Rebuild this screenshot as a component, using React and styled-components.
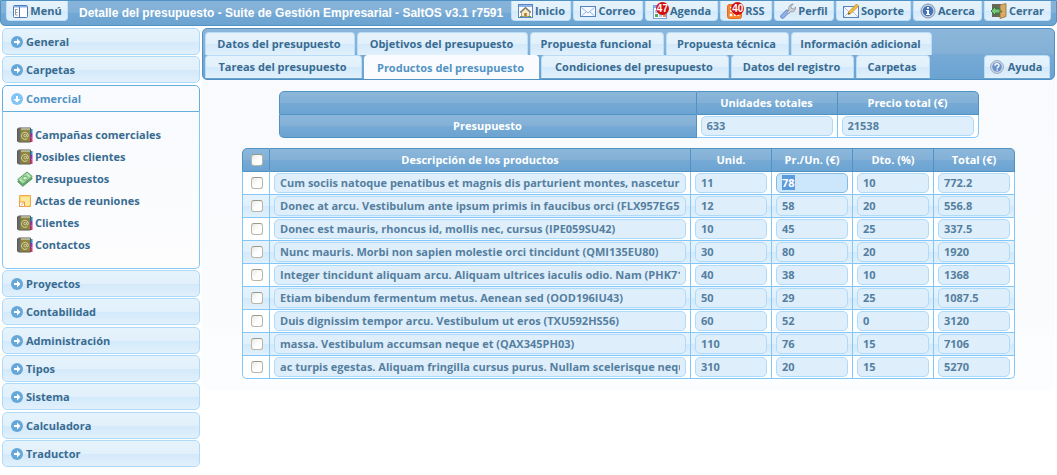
import React, { useEffect, useRef, useState } from "react";
import styled, { createGlobalStyle, css } from "styled-components";

const ink = "#386b91";
const deep = "#4f92c3";
const sky = "#83c6f8";
const pale = "#aedbfa";

const softGlass = "linear-gradient(#e6f3fc 0, #e1f0fb 50%, #d3e9fa 51%, #e1f0fc 100%)";
const blueGlass = "linear-gradient(#8cb7db 0, #83b0d6 48%, #76aad5 52%, #6ba3d1 100%)";

const GlobalStyle = createGlobalStyle`
  *, *::before, *::after { box-sizing: border-box; }
  body {
    margin: 0;
    background: #fff;
    color: ${ink};
    font: bold 11px/14px "Open Sans", "Noto Sans", sans-serif;
  }
  button, input { font: inherit; color: inherit; }
`;

const Toolbar = styled.header`
  display: flex;
  align-items: flex-start;
  height: 26px;
  padding: 0 5px;
  border: 1px solid ${deep};
  border-radius: 0 0 5px 5px;
  background: linear-gradient(#86b3d9 0, #82b0d7 48%, #72a8d5 52%, #6ba3d1 100%);
`;

const Title = styled.h1`
  flex: 1;
  margin: 0;
  padding-left: 11px;
  overflow: hidden;
  color: #fff;
  font: bold 12px/24px "Liberation Sans", Arial, sans-serif;
  white-space: nowrap;
`;

const ButtonGroup = styled.nav`
  display: flex;
  gap: 2px;
`;

const ToolButton = styled.button`
  display: flex;
  align-items: center;
  justify-content: center;
  gap: 2px;
  width: ${(p) => p.$width}px;
  height: 20px;
  padding: 0;
  border: 1px solid #bfe0f9;
  border-top: 0;
  border-radius: 0 0 4px 4px;
  background: ${softGlass};
  white-space: nowrap;
`;

const IconBox = styled.span`
  position: relative;
  display: flex;
  flex: none;
  svg { display: block; }
`;

const Badge = styled.span`
  position: absolute;
  top: -1px;
  right: -1px;
  width: 13px;
  height: 13px;
  border-radius: 50%;
  background: #d40d0d;
  color: #fff;
  font: bold 10px/13px "Liberation Sans", Arial, sans-serif;
  text-align: center;
`;

const Workspace = styled.div`
  display: flex;
  align-items: flex-start;
  gap: 2px;
  padding: 2px 2px 0;
`;

const Sidebar = styled.aside`
  flex: none;
  width: 198px;
`;

const Section = styled.section`
  margin-bottom: 1px;
  &:nth-child(3n + 2) { margin-bottom: 2px; }
`;

const SectionToggle = styled.button`
  display: flex;
  align-items: center;
  gap: 3px;
  width: 100%;
  height: 27px;
  padding: 0 8px;
  border: 1px solid ${pale};
  border-radius: 5px;
  background: ${softGlass};
  ${(p) => p.$open && css`
    border-color: #66aede;
    border-radius: 5px 5px 0 0;
    background: #f9fbfe;
    color: #5293c5;
  `}
`;

const SectionBody = styled.div`
  display: flex;
  flex-direction: column;
  gap: 8px;
  padding: 16px 14px;
  border: 1px solid ${sky};
  border-top: 0;
  border-radius: 0 0 5px 5px;
  background: linear-gradient(#f8fafd, #fdfdfe);
`;

const MenuLink = styled.a`
  display: flex;
  align-items: center;
  gap: 2px;
  height: 14px;
  color: inherit;
  text-decoration: none;
`;

const Main = styled.main`
  flex: 1;
  min-width: 0;
  min-height: 362px;
  border-radius: 5px;
  background: linear-gradient(#f9fafd 0, #f9fbfd 80%, #fcfdfe 86%);
`;

const TabBar = styled.div`
  display: flex;
  flex-direction: column;
  height: 52px;
  padding: 3px 4px 0 2px;
  border: 1px solid ${deep};
  border-radius: 5px;
  background: ${blueGlass};
`;

const TabRow = styled.div`
  display: flex;
  gap: 2px;
  height: 24px;
`;

const Tab = styled.button`
  display: flex;
  align-items: center;
  justify-content: center;
  gap: 4px;
  width: ${(p) => p.$width}px;
  height: ${(p) => (p.$active ? 24 : 23)}px;
  padding: 0 2px 0 0;
  border: 1px solid ${(p) => (p.$active ? "#f9fbfe" : "#b9dcf7")};
  border-bottom: 0;
  border-radius: 4px 4px 0 0;
  background: ${(p) => (p.$active ? "#f9fbfe" : softGlass)};
  color: ${(p) => (p.$active ? "#5293c5" : ink)};
  white-space: nowrap;
  ${(p) => p.$end && "margin-left: auto;"}
`;

const Tables = styled.div`
  display: flex;
  flex-direction: column;
  align-items: center;
  gap: 10px;
  padding: 11px 0;
`;

const Grid = styled.table`
  table-layout: fixed;
  width: ${(p) => p.$width}px;
  border-spacing: 0;
  border-collapse: separate;

  tr > :first-child { border-left-width: 1px; }
  tr:first-child > :first-child { border-top-left-radius: 5px; }
  tr:first-child > :last-child { border-top-right-radius: 5px; }
`;

const Body = styled.tbody`
  && tr > :first-child, && tr > :last-child { border-top-left-radius: 0; border-top-right-radius: 0; }
  && tr:last-child > :first-child { border-bottom-left-radius: 5px; }
  && tr:last-child > :last-child { border-bottom-right-radius: 5px; }
`;

const Head = styled.th`
  height: ${(p) => (p.$tall ? 24 : 23)}px;
  padding: 0;
  border: 0 solid ${deep};
  border-width: ${(p) => (p.$tall ? "1px 1px 1px 0" : "0 1px 1px 0")};
  background: ${blueGlass};
  color: #fff;
  text-align: center;
`;

const Cell = styled.td`
  height: 23px;
  padding: 0 4px;
  border: 0 solid ${sky};
  border-width: 0 1px 1px 0;
  background: ${(p) => (p.$odd ? softGlass : "#fff")};
`;

const Field = styled.input`
  display: block;
  width: ${(p) => (p.$fill ? "100%" : p.$width + "px")};
  height: 20px;
  padding: 0 5px 2px;
  border: 1px solid ${pale};
  border-radius: 5px;
  outline: 0;
  background: #deeefb;
  color: #557f9f;
  &:focus { border-color: #85bce6; background: #cce7fc; }
  &::selection { background: #5c9bdc; color: #fff; }
`;

const CheckHolder = styled.div`
  display: flex;
  justify-content: center;
  padding-left: 2px;
`;

const CheckInput = styled.input.attrs({ type: "checkbox" })`
  appearance: none;
  width: 12px;
  height: 12px;
  margin: 0;
  border: 1px solid #b9b8a8;
  border-top-color: #979a85;
  border-radius: 3px;
  background: linear-gradient(135deg, #e9e9e6, #fff 55%);
  &:checked { background: ${deep}; }
`;

const Check = ({ label }) => (
  <CheckHolder>
    <CheckInput aria-label={label} />
  </CheckHolder>
);

const Svg = ({ size = 16, children }) => (
  <svg width={size} height={size} viewBox={`0 0 ${size} ${size}`} aria-hidden="true">{children}</svg>
);

const MenuIcon = () => (
  <Svg>
    <rect x="1.5" y="2.5" width="14" height="12" rx="1" fill="#fff" stroke="#5279ba" />
    <path d="M2 3h13v1.500H2z" fill="#88aee8" />
    <path d="M7.500 4v10" stroke="#5279ba" />
    <path d="M3.500 6v6M3.500 6.500h2M3.500 9.500h2M3.500 12h2" stroke="#999" fill="none" />
  </Svg>
);
const HomeIcon = () => (
  <Svg>
    <rect x="1.5" y="1.5" width="14" height="13" fill="#fff" stroke="#5b84c2" />
    <path d="M2 2h13v2H2z" fill="#8fb3ea" />
    <path d="M4.500 9v4.500h8V9l-4-3.500z" fill="#f3ebc8" stroke="#97917c" strokeWidth=".8" />
    <path d="M3 9.500l5.500-5 5.500 5" fill="none" stroke="#7c7566" strokeWidth="1.200" />
    <path d="M7.200 10h2.600v3.500H7.200z" fill="#b87c2c" />
    <path d="M3 13.500h3M11 13.500h3" stroke="#62a43e" />
  </Svg>
);
const MailIcon = () => (
  <Svg>
    <rect x="0.5" y="3.5" width="15" height="10" fill="#f6faff" stroke="#5583c4" />
    <path d="M1.500 4.500L8 10l6.500-5.500M1.500 13l5-4.500M14.500 13l-5-4.500" fill="none" stroke="#94b6e2" />
  </Svg>
);
const AgendaIcon = () => (
  <Svg>
    <rect x="1.5" y="2.5" width="13" height="13" fill="#fff" stroke="#7aa1dc" />
    <path d="M2 3h12v2H2z" fill="#8db1eb" />
    <path d="M3 7h3v3H3zM7 11h3v3H7z" fill="#aac7ee" />
    <path d="M3 11h3v3H3z" fill="#58a653" />
    <path d="M7 7h3v3H7zM11 11h3v3h-3z" fill="#ee8c53" />
  </Svg>
);
const RssIcon = () => (
  <Svg>
    <rect x="0.5" y="1.5" width="14" height="14" rx="2" fill="#f58634" stroke="#e7681c" />
    <path d="M3 4.500a8.500 8.500 0 0 1 8.500 8.500M3 8a5 5 0 0 1 5 5" fill="none" stroke="#fff" strokeWidth="1.700" />
    <circle cx="4" cy="12" r="1.400" fill="#fff" />
  </Svg>
);
const WrenchIcon = () => (
  <Svg>
    <path d="M2.500 13.500L7 9" stroke="#5c84c4" strokeWidth="4.500" strokeLinecap="round" />
    <path d="M2.500 13.500L7 9" stroke="#8fb1e8" strokeWidth="3" strokeLinecap="round" />
    <path d="M7 9.500l2-2.500c-1-3 1-6 4.200-6L11 3.500l.5 2 2 .5L15.700 4c.3 3.200-2.500 5.500-5.200 4.500L8.500 11z" fill="#d2d5da" stroke="#858c98" strokeWidth=".8" />
  </Svg>
);
const SupportIcon = () => (
  <Svg>
    <rect x="0.5" y="3.500" width="15" height="11" fill="#f3f8ff" stroke="#5583c4" />
    <path d="M1 14l5-5M15 14l-5-5M1 4l6 6" stroke="#a6c4ec" />
    <path d="M5 11.500l1-3L13.500 1l2 2L8 10.500z" fill="#f5bd37" stroke="#c08c35" strokeWidth=".8" />
    <path d="M5 11.500l.8-2 1.300 1.200z" fill="#444" />
  </Svg>
);
const InfoIcon = () => (
  <Svg>
    <circle cx="8" cy="8" r="7" fill="#c6d2e4" stroke="#8396b4" />
    <circle cx="8" cy="8" r="5.300" fill="#4673b5" />
    <path d="M7 4h2v1.700H7zM6 7h3v4h1v1H6v-1h1V8H6z" fill="#fff" />
  </Svg>
);
const HelpIcon = () => (
  <Svg size={14}>
    <circle cx="7" cy="7" r="6.400" fill="#d6deea" stroke="#94a6c1" />
    <circle cx="7" cy="7" r="4.800" fill="#6b93cb" />
    <path d="M5 5.800c0-2.600 4-2.600 4-.3C9 7 7.200 6.800 7.200 8.500M7.200 9.500v1.300" fill="none" stroke="#fff" strokeWidth="1.400" />
  </Svg>
);
const ExitIcon = () => (
  <Svg>
    <path d="M1 1h9v13H1z" fill="#68655a" />
    <path d="M9 2l6-1.500v13L9 15.500z" fill="#d7a961" stroke="#94713d" strokeWidth=".8" />
    <path d="M0 8l4.500-4.500V6H9v4H4.500v2.500z" fill="#79c578" stroke="#26783c" strokeWidth=".9" />
    <circle cx="10.500" cy="8.500" r=".7" fill="#6e4f22" />
  </Svg>
);
const BookIcon = () => (
  <Svg>
    <path d="M13 2h2.500v4H13z" fill="#1297ee" />
    <path d="M13 6h2.500v4.500H13z" fill="#b816e8" />
    <path d="M13 10.500h2.500V15H13z" fill="#ff1d85" />
    <path d="M1.500 1h12v14h-12L.5 14V2z" fill="#8d8540" stroke="#5b5a50" />
    <path d="M1 1.500h2.500v13H1z" fill="#6a6a68" />
    <path d="M4 2h9" stroke="#e8e8e0" />
    <path d="M10.500 11.300a3.500 3.500 0 1 1 1-2.700c0 1.600-1.700 1.600-1.700 0V7.200" fill="none" stroke="#ddd8ad" strokeWidth=".9" />
    <circle cx="8.200" cy="8.600" r="1.300" fill="none" stroke="#ddd8ad" strokeWidth=".8" />
  </Svg>
);
const MoneyIcon = () => (
  <Svg>
    <path d="M.7 10.500L10 3l5.300 4.500-9.500 7.800z" fill="#6fae73" stroke="#4b9256" />
    <path d="M.7 8.500L10 1l5.300 4.500-9.500 7.800z" fill="#a6d9a4" stroke="#55a05f" />
    <ellipse cx="8" cy="7.200" rx="2.300" ry="2" fill="#d5efcf" stroke="#65ad6a" />
    <path d="M3 8.500l2 2M10.500 3.500l2 2" stroke="#e0f4db" />
  </Svg>
);
const NoteIcon = () => (
  <Svg>
    <path d="M2.500 2.500h11v11h-11z" fill="#fdd868" stroke="#f0a856" />
    <path d="M4 4h8.500v8.500H8V8.500H4z" fill="#feea9c" />
    <path d="M2.500 9h5v4.500h-5z" fill="#fff" stroke="#ee9a4b" />
    <path d="M4 12.500L7 9.500" stroke="#ee9a4b" />
  </Svg>
);
const ArrowIcon = ({ down }) => (
  <Svg size={12}>
    <circle cx="6" cy="6" r="6" fill={down ? "#82c4f6" : "#66a7da"} />
    <path d={down ? "M5 3h2v3h2.500L6 9.500 2.500 6H5z" : "M3 5h3V2.500L9.500 6 6 9.500V7H3z"} fill="#fff" />
  </Svg>
);

const tools = [
  { label: "Inicio", width: 60, Icon: HomeIcon },
  { label: "Correo", width: 70, Icon: MailIcon },
  { label: "Agenda", width: 73, Icon: AgendaIcon, badge: 47 },
  { label: "RSS", width: 52, Icon: RssIcon, badge: 40 },
  { label: "Perfil", width: 60, Icon: WrenchIcon },
  { label: "Soporte", width: 75, Icon: SupportIcon },
  { label: "Acerca", width: 69, Icon: InfoIcon },
  { label: "Cerrar", width: 67, Icon: ExitIcon },
];

const sections = ["General", "Carpetas", "Comercial", "Proyectos", "Contabilidad", "Administración", "Tipos", "Sistema", "Calculadora", "Traductor"];

const links = [
  ["Campañas comerciales", BookIcon],
  ["Posibles clientes", BookIcon],
  ["Presupuestos", MoneyIcon],
  ["Actas de reuniones", NoteIcon],
  ["Clientes", BookIcon],
  ["Contactos", BookIcon],
];

const tabRows = [
  [["Datos del presupuesto", 150], ["Objetivos del presupuesto", 171], ["Propuesta funcional", 134], ["Propuesta técnica", 123], ["Información adicional", 141]],
  [["Tareas del presupuesto", 157], ["Productos del presupuesto", 175], ["Condiciones del presupuesto", 188], ["Datos del registro", 123], ["Carpetas", 74]],
];

const products = [
  ["Cum sociis natoque penatibus et magnis dis parturient montes, nascetur ridiculus mus", 11, 78, 10, 772.2],
  ["Donec at arcu. Vestibulum ante ipsum primis in faucibus orci (FLX957EG57)", 12, 58, 20, 556.8],
  ["Donec est mauris, rhoncus id, mollis nec, cursus (IPE059SU42)", 10, 45, 25, 337.5],
  ["Nunc mauris. Morbi non sapien molestie orci tincidunt (QMI135EU80)", 30, 80, 20, 1920],
  ["Integer tincidunt aliquam arcu. Aliquam ultrices iaculis odio. Nam (PHK717", 40, 38, 10, 1368],
  ["Etiam bibendum fermentum metus. Aenean sed (OOD196IU43)", 50, 29, 25, 1087.5],
  ["Duis dignissim tempor arcu. Vestibulum ut eros (TXU592HS56)", 60, 52, 0, 3120],
  ["massa. Vestibulum accumsan neque et (QAX345PH03)", 110, 76, 15, 7106],
  ["ac turpis egestas. Aliquam fringilla cursus purus. Nullam scelerisque neque", 310, 20, 15, 5270],
];

const columns = ["Descripción de los productos", "Unid.", "Pr./Un. (€)", "Dto. (%)", "Total (€)"];

export default function App() {
  const price = useRef(null);
  const [open, setOpen] = useState("Comercial");
  const [active, setActive] = useState("Productos del presupuesto");

  useEffect(() => {
    price.current.focus();
    price.current.select();
  }, []);

  return (
    <>
      <GlobalStyle />
      <Toolbar>
        <ToolButton $width={62}>
          <IconBox><MenuIcon /></IconBox>
          Menú
        </ToolButton>
        <Title>Detalle del presupuesto - Suite de Gestión Empresarial - SaltOS v3.1 r7591</Title>
        <ButtonGroup>
          {tools.map(({ label, width, Icon, badge }) => (
            <ToolButton key={label} $width={width}>
              <IconBox>
                <Icon />
                {badge && <Badge>{badge}</Badge>}
              </IconBox>
              {label}
            </ToolButton>
          ))}
        </ButtonGroup>
      </Toolbar>
      <Workspace>
        <Sidebar>
          {sections.map((name) => (
            <Section key={name}>
              <SectionToggle $open={open === name} aria-expanded={open === name} onClick={() => setOpen(name)}>
                <ArrowIcon down={open === name} />
                {name}
              </SectionToggle>
              {open === name && name === "Comercial" && (
                <SectionBody>
                  {links.map(([text, Icon]) => (
                    <MenuLink key={text} href="#">
                      <Icon />
                      {text}
                    </MenuLink>
                  ))}
                </SectionBody>
              )}
            </Section>
          ))}
        </Sidebar>
        <Main>
          <TabBar>
            {tabRows.map((row, i) => (
              <TabRow key={i}>
                {row.map(([text, width]) => (
                  <Tab key={text} $width={width} $active={active === text} onClick={() => setActive(text)}>{text}</Tab>
                ))}
                {i === 1 && <Tab $width={66} $end><HelpIcon />Ayuda</Tab>}
              </TabRow>
            ))}
          </TabBar>
          <Tables>
            <Grid $width={700}>
              <colgroup><col width="418" /><col width="141" /><col width="141" /></colgroup>
              <thead>
                <tr>
                  <Head $tall />
                  <Head $tall scope="col">Unidades totales</Head>
                  <Head $tall scope="col">Precio total (€)</Head>
                </tr>
              </thead>
              <Body>
                <tr>
                  <Head scope="row">Presupuesto</Head>
                  <Cell><Field $width={132} aria-label="Unidades totales" defaultValue="633" /></Cell>
                  <Cell><Field $width={132} aria-label="Precio total" defaultValue="21538" /></Cell>
                </tr>
              </Body>
            </Grid>
            <Grid $width={773}>
              <colgroup><col width="28" /><col width="421" /><col width="81" /><col width="81" /><col width="81" /><col width="81" /></colgroup>
              <thead>
                <tr>
                  <Head $tall><Check label="Seleccionar todo" /></Head>
                  {columns.map((c) => <Head $tall scope="col" key={c}>{c}</Head>)}
                </tr>
              </thead>
              <Body>
                {products.map(([text, ...values], r) => (
                  <tr key={text}>
                    <Cell $odd={r % 2 === 1}><Check label={`Seleccionar ${text}`} /></Cell>
                    <Cell $odd={r % 2 === 1}><Field $fill aria-label={columns[0]} defaultValue={text} /></Cell>
                    {values.map((v, c) => (
                      <Cell key={c} $odd={r % 2 === 1}>
                        <Field $width={72} ref={r === 0 && c === 1 ? price : null} aria-label={columns[c + 1]} defaultValue={v} />
                      </Cell>
                    ))}
                  </tr>
                ))}
              </Body>
            </Grid>
          </Tables>
        </Main>
      </Workspace>
    </>
  );
}
